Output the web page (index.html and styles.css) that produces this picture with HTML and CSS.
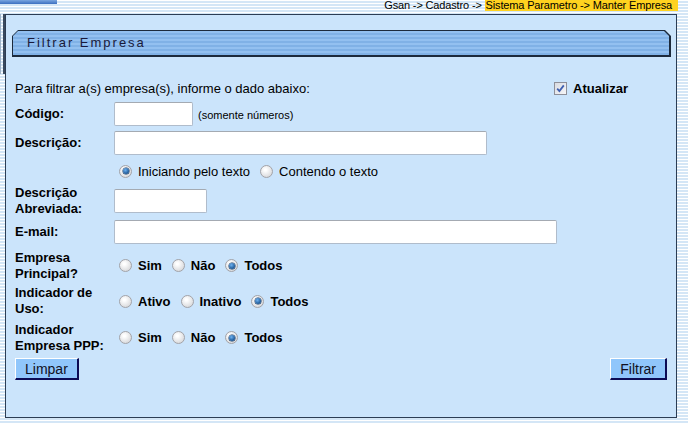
FILE: index.html
```html
<!DOCTYPE html>
<html lang="pt-BR">
<head>
    <meta charset="UTF-8">
    <title>Filtrar Empresa</title>
    <link rel="stylesheet" href="styles.css">
</head>
<body>

    <!-- Barra superior -->
    <div class="top">
        <div class="logo-bar"></div>
        <div class="crumbs">Gsan -&gt; Cadastro -&gt; <span class="here">Sistema Parametro -&gt; Manter Empresa</span></div>
    </div>

    <div class="main">
        <div class="side-edge"></div>

        <!-- Painel do filtro -->
        <div class="panel">
            <div class="tab"><div class="tab-in">Filtrar Empresa</div></div>

            <form class="filtro">
                <div class="intro">
                    <span>Para filtrar a(s) empresa(s), informe o dado abaixo:</span>
                    <label class="atualizar">
                        <span class="check">
                            <svg width="9" height="9" viewBox="0 0 9 9"><path d="M1.2 4.6 L3.4 7 L7.8 1.4" fill="none" stroke="#3f5fb0" stroke-width="1.8"/></svg>
                        </span>
                        Atualizar
                    </label>
                </div>

                <div class="lbl">Código:</div>
                <div class="ctl"><input class="inp w-cod" type="text"><span class="hint">(somente números)</span></div>

                <div class="lbl">Descrição:</div>
                <div class="ctl"><input class="inp w-desc" type="text"></div>

                <div class="lbl"></div>
                <div class="ctl normal">
                    <span class="radio on"></span>Iniciando pelo texto
                    <span class="radio"></span>Contendo o texto
                </div>

                <div class="lbl">Descrição Abreviada:</div>
                <div class="ctl"><input class="inp w-abrev" type="text"></div>

                <div class="lbl">E-mail:</div>
                <div class="ctl"><input class="inp w-mail" type="text"></div>

                <div class="lbl">Empresa Principal?</div>
                <div class="ctl">
                    <span class="radio"></span>Sim
                    <span class="radio"></span>Não
                    <span class="radio on"></span>Todos
                </div>

                <div class="lbl">Indicador de Uso:</div>
                <div class="ctl">
                    <span class="radio"></span>Ativo
                    <span class="radio"></span>Inativo
                    <span class="radio on"></span>Todos
                </div>

                <div class="lbl">Indicador Empresa PPP:</div>
                <div class="ctl">
                    <span class="radio"></span>Sim
                    <span class="radio"></span>Não
                    <span class="radio on"></span>Todos
                </div>

                <div class="actions">
                    <button type="button" class="btn">Limpar</button>
                    <button type="button" class="btn">Filtrar</button>
                </div>
            </form>
        </div>
    </div>

</body>
</html>
```

FILE: styles.css
```css
/* Pagina */
body {
    margin: 0;
    font-family: "Liberation Sans", Arial, sans-serif;
    color: #000;
    background: repeating-linear-gradient(to bottom, #ffffff 0, #ffffff 1px, #d4e6f6 1px, #d4e6f6 3px);
    height: 424px;
    overflow: hidden;
}

/* Topo */
.top {
    height: 14px;
    position: relative;
}

.logo-bar {
    position: absolute;
    left: 0;
    top: 0;
    width: 57px;
    height: 4px;
    background: linear-gradient(to bottom, #7aa6e0, #3c6fc0);
}

.crumbs {
    text-align: right;
    font-size: 11px;
    letter-spacing: -0.15px;
    line-height: 10px;
    padding-right: 10px;
}

.crumbs .here {
    background: #ffd21f;
    padding: 0 6px 0 1px;
}

/* Area principal */
.main {
    display: flex;
}

.side-edge {
    width: 5px;
    height: 60px;
    box-sizing: border-box;
    border-left: 1px solid #9fb3c8;
    border-right: 2px solid #3b4a5e;
}

.panel {
    width: 672px;
    height: 404px;
    box-sizing: border-box;
    border: 1px solid #2c3d54;
    background: #cbe4fb;
    padding: 15px 5px 0 6px;
}

/* Aba do titulo */
.tab {
    height: 27px;
    background: #1c2a3c;
    padding: 1px 2px 2px 1px;
    box-sizing: border-box;
    clip-path: polygon(6px 0, calc(100% - 6px) 0, 100% 6px, 100% 100%, 0 100%, 0 6px);
}

.tab-in {
    height: 100%;
    background: repeating-linear-gradient(to bottom, #93c0f0 0, #93c0f0 2px, #80b1e6 2px, #80b1e6 4px);
    clip-path: polygon(5px 0, calc(100% - 5px) 0, 100% 5px, 100% 100%, 0 100%, 0 5px);
    color: #1a1a3a;
    font-size: 13px;
    letter-spacing: 2px;
    line-height: 24px;
    padding-left: 14px;
}

/* Formulario */
.filtro {
    margin: 19px 4px 0 3px;
    display: grid;
    grid-template-columns: 99px 1fr;
    grid-template-rows: 24px 28px 29px 28px 31px 32px 35px 36px 37px;
    font-size: 13px;
}

.intro {
    grid-column: 1 / -1;
    display: flex;
    justify-content: space-between;
    align-items: center;
    padding-right: 39px;
}

.atualizar {
    display: flex;
    align-items: center;
    font-weight: bold;
    gap: 6px;
}

.check {
    width: 13px;
    height: 13px;
    box-sizing: border-box;
    border: 1px solid #8e8f99;
    background: linear-gradient(135deg, #d9dbe2, #f6f6f8);
    display: flex;
    align-items: center;
    justify-content: center;
}

.lbl {
    font-weight: bold;
    line-height: 16px;
    display: flex;
    align-items: center;
}

.ctl {
    display: flex;
    align-items: center;
    font-weight: bold;
}

.ctl.normal {
    font-weight: normal;
}

.inp {
    height: 24px;
    box-sizing: border-box;
    border: 1px solid #b0bccb;
    border-top-color: #a4aab2;
    border-radius: 2px;
    background: #fff;
    padding: 0 3px;
    margin: 0;
}

.w-cod { width: 79px; }
.w-desc { width: 373px; }
.w-abrev { width: 93px; }
.w-mail { width: 443px; }

.hint {
    font-size: 11px;
    font-weight: normal;
    margin-left: 5px;
    padding-top: 2px;
}

/* Radios */
.radio {
    width: 13px;
    height: 13px;
    box-sizing: border-box;
    border-radius: 50%;
    border: 1px solid #a3a3a8;
    background: radial-gradient(circle at 40% 35%, #ffffff 10%, #d2d3d6 90%);
    margin: 0 6px 0 10px;
    position: relative;
    flex: none;
}

.radio:first-child {
    margin-left: 5px;
}

.radio.on::after {
    content: "";
    position: absolute;
    left: 2.5px;
    top: 2.5px;
    width: 6px;
    height: 6px;
    border-radius: 50%;
    background: radial-gradient(circle at 40% 35%, #6fb2f0, #15508f 75%);
    box-shadow: 0 0 0 0.5px #0b2f5c;
}

/* Botoes */
.actions {
    grid-column: 1 / -1;
    display: flex;
    justify-content: space-between;
    margin-top: 2px;
}

.btn {
    height: 22px;
    box-sizing: border-box;
    font-family: "Liberation Sans", Arial, sans-serif;
    font-size: 14px;
    color: #111122;
    background: #90c6fb;
    border-style: solid;
    border-width: 1px 2px 2px 1px;
    border-color: #ffffff #0b0b55 #0b0b55 #ffffff;
    padding: 0 9px;
    line-height: 18px;
}
```
